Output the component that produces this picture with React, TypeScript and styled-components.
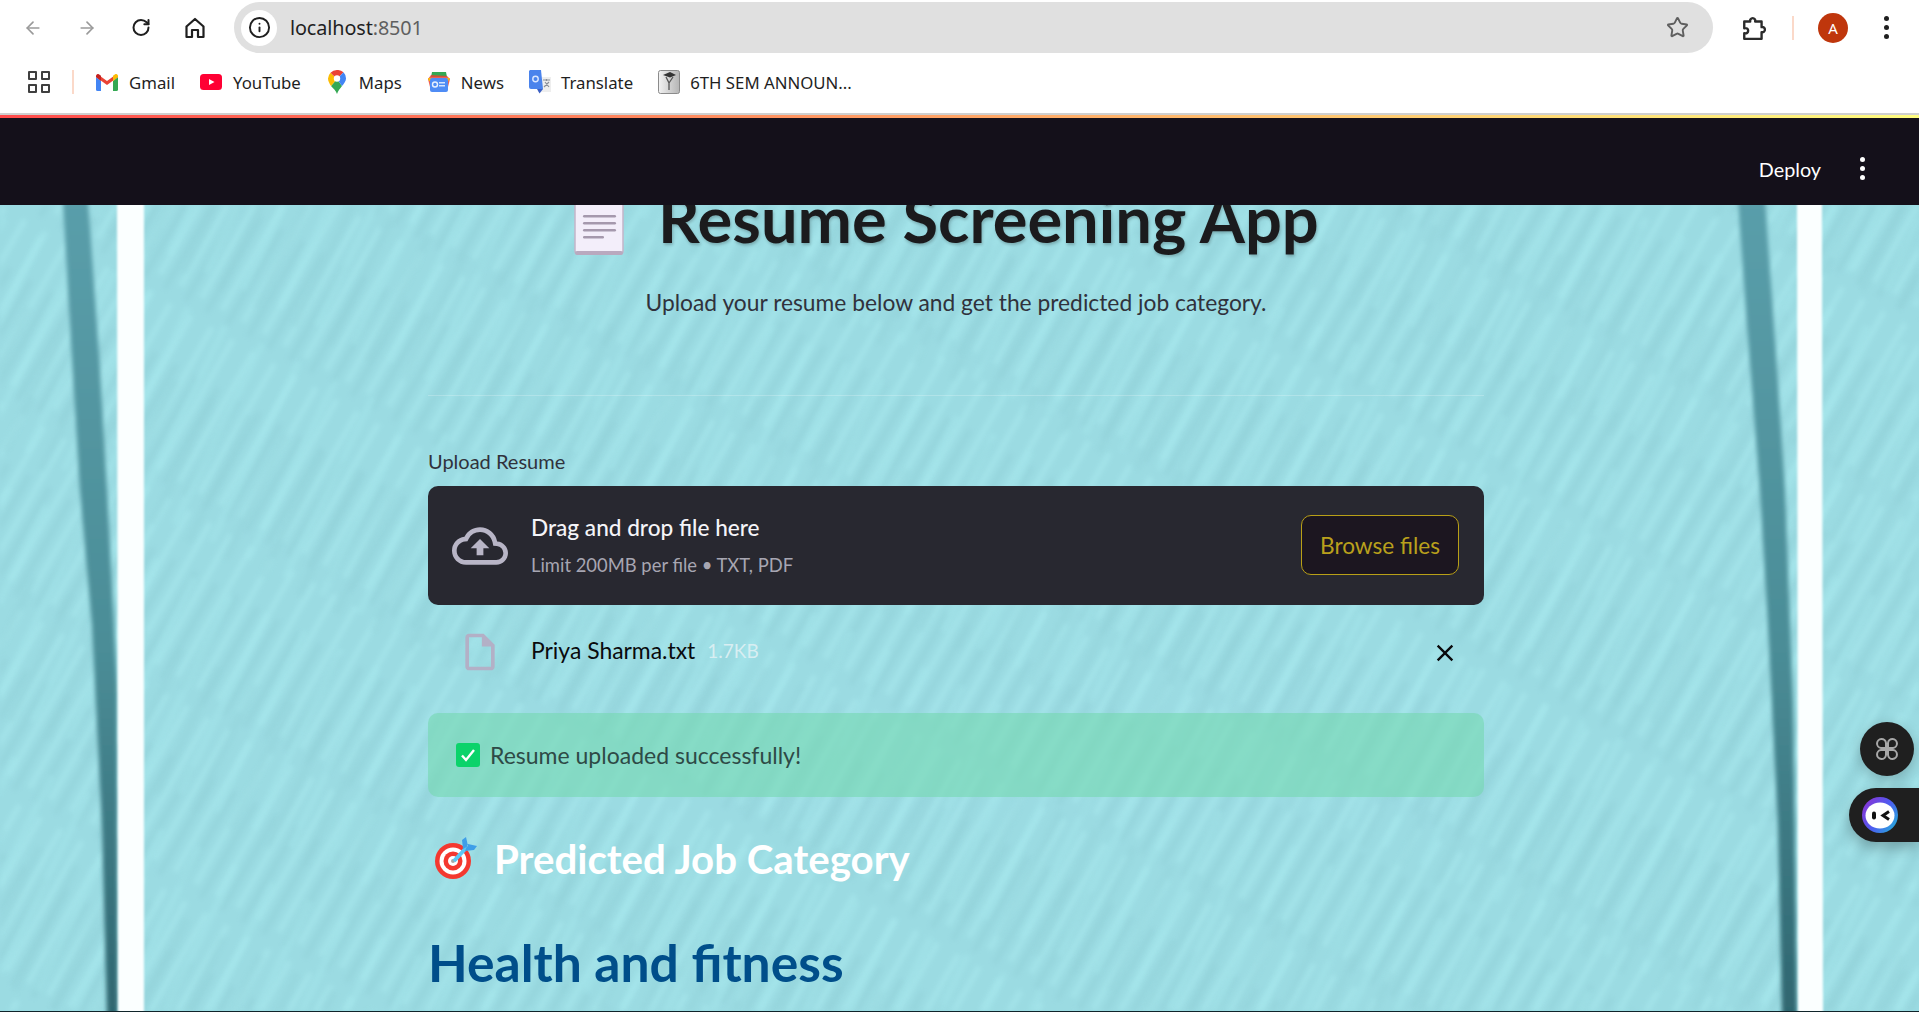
import React from 'react';
import styled, { createGlobalStyle } from 'styled-components';
import { ArrowLeft, ArrowRight, RotateCw, Info, Star } from 'lucide-react';
import { MdOutlineCloudUpload, MdOutlineInsertDriveFile, MdClose } from 'react-icons/md';

const GlobalStyle = createGlobalStyle`
  html, body {
    margin: 0;
    height: 100%;
    overflow: hidden;
    background: #fff;
  }
  * { box-sizing: border-box; }
`;

const chromeFont = `"Noto Sans", "Open Sans", sans-serif`;
const appFont = `"Lato", "Noto Sans", sans-serif`;

const Page = styled.div`
  width: 1919px;
  height: 1012px;
  display: flex;
  flex-direction: column;
  overflow: hidden;
`;

const Toolbar = styled.div`
  height: 58px;
  flex: none;
  display: flex;
  align-items: flex-start;
  padding: 2px 0 0 23px;
  background: #fff;
  font-family: ${chromeFont};
`;

const NavGroup = styled.div`
  height: 51px;
  display: flex;
  align-items: center;
  gap: 34px;
`;

const NavIcon = styled.span<{ $dim?: boolean }>`
  width: 20px;
  height: 20px;
  display: flex;
  align-items: center;
  justify-content: center;
  color: ${(p) => (p.$dim ? '#9a9a9a' : '#1f1f1f')};
`;

const Omnibox = styled.div`
  width: 1479px;
  height: 51px;
  margin-left: 29px;
  padding: 0 24px 0 7px;
  display: flex;
  align-items: center;
  border-radius: 26px;
  background: #e0e0e0;
`;

const SiteInfo = styled.span`
  width: 36px;
  height: 36px;
  flex: none;
  display: flex;
  align-items: center;
  justify-content: center;
  border-radius: 50%;
  background: #fff;
  color: #1f1f1f;
`;

const Url = styled.div`
  margin-left: 13px;
  flex: 1;
  font-size: 19.8px;
  color: #1f1f1f;
  letter-spacing: -0.1px;
  span { color: #5f5f5f; }
`;

const ToolbarEnd = styled.div`
  height: 51px;
  display: flex;
  align-items: center;
  padding-left: 29px;
`;

const VerticalRule = styled.span`
  width: 2px;
  height: 24px;
  background: #fbd9c9;
`;

const ToolbarRule = styled(VerticalRule)`
  margin-left: 26px;
`;

const Avatar = styled.span`
  width: 30px;
  height: 30px;
  margin: 0 36px 0 24px;
  display: flex;
  align-items: center;
  justify-content: center;
  border-radius: 50%;
  background: #bf360c;
  color: #fff;
  font-size: 15px;
`;

const Dots = styled.span<{ $color: string; $gap: number }>`
  width: 6px;
  display: flex;
  flex-direction: column;
  gap: ${(p) => p.$gap}px;
  i {
    width: 5px;
    height: 5px;
    border-radius: 50%;
    background: ${(p) => p.$color};
  }
`;

const BookmarkBar = styled.div`
  height: 55px;
  flex: none;
  display: flex;
  align-items: center;
  padding: 0 0 7px 28px;
  background: #fff;
  font-family: ${chromeFont};
  font-size: 16.8px;
  color: #1f1f1f;
`;

const AppsIcon = styled.span`
  width: 22px;
  height: 22px;
  display: grid;
  grid-template-columns: 9px 9px;
  gap: 4px;
  i {
    border: 2px solid #3f3f3f;
    border-radius: 1px;
  }
`;

const BookmarkRule = styled(VerticalRule)`
  margin: 0 22px;
`;

const Bookmark = styled.div<{ $gap: number; $end: number }>`
  display: flex;
  align-items: center;
  gap: ${(p) => p.$gap}px;
  margin-right: ${(p) => p.$end}px;
  white-space: nowrap;
`;

const ChromeLine = styled.div`
  height: 2px;
  flex: none;
  background: #cfcfcf;
`;

const Decoration = styled.div`
  height: 3px;
  flex: none;
  background: linear-gradient(90deg, #ff4b4b, #fffd80);
`;

const AppHeader = styled.header`
  height: 87px;
  flex: none;
  display: flex;
  align-items: center;
  justify-content: flex-end;
  padding: 14px 53px 0 0;
  background: #14101a;
  color: #fff;
  font-family: ${appFont};
  font-size: 19.8px;
`;

const DeployLabel = styled.span`
  margin-right: 39px;
`;

const Main = styled.main`
  position: relative;
  flex: 1;
  overflow: hidden;
  background: #9bdbe2;
  border-bottom: 1px solid #10242a;
  font-family: ${appFont};
`;

const BackgroundArt = styled.svg`
  position: absolute;
  inset: 0;
  width: 100%;
  height: 100%;
`;

const Content = styled.div`
  position: relative;
  width: 1056px;
  margin: -17px 0 0 428px;
`;

const TitleRow = styled.div`
  height: 80px;
  display: flex;
  align-items: flex-end;
  padding-left: 146px;
  gap: 34px;
`;

const DocSvg = styled.svg`
  flex: none;
  margin-bottom: 12px;
`;

const Title = styled.h1`
  margin: 0 0 10px;
  font-size: 65px;
  line-height: 80px;
  font-weight: 700;
  color: #1b1b1d;
  white-space: nowrap;
  text-shadow: 1px 2px 3px rgba(0, 0, 0, 0.22);
`;

const Subtitle = styled.p`
  margin: 17px 0 0;
  height: 34px;
  font-size: 22.8px;
  line-height: 34px;
  text-align: center;
  color: #30323c;
`;

const Divider = styled.hr`
  margin: 76px 0 0;
  border: 0;
  height: 1px;
  background: rgba(255, 255, 255, 0.22);
`;

const FieldLabel = styled.label`
  display: block;
  margin-top: 53px;
  height: 24px;
  font-size: 20px;
  line-height: 24px;
  color: #30323c;
`;

const Dropzone = styled.section`
  margin-top: 13px;
  height: 119px;
  padding: 0 25px 0 24px;
  display: flex;
  align-items: center;
  border-radius: 10px;
  background: #282830;
`;

const CloudIcon = styled(MdOutlineCloudUpload)`
  flex: none;
  color: #b8b5c6;
`;

const DropText = styled.div`
  flex: 1;
  margin-left: 23px;
`;

const DropTitle = styled.div`
  font-size: 22.6px;
  line-height: 30px;
  font-weight: 500;
  color: #f4f4f8;
`;

const DropHint = styled.div`
  margin-top: 9px;
  font-size: 18.4px;
  line-height: 26px;
  color: #a7a6b2;
`;

const BrowseButton = styled.button`
  width: 158px;
  height: 60px;
  margin-top: -1px;
  border: 1px solid #b89f17;
  border-radius: 10px;
  background: #1c1620;
  color: #b9a01c;
  font-family: inherit;
  font-size: 22.6px;
`;

const FileRow = styled.div`
  height: 108px;
  padding: 0 26px 14px 30px;
  display: flex;
  align-items: center;
`;

const FileIcon = styled(MdOutlineInsertDriveFile)`
  flex: none;
  color: #b3b0c6;
`;

const FileName = styled.span`
  margin: 0 0 4px 29px;
  font-size: 22.9px;
  color: #0a0a0c;
`;

const FileSize = styled.span`
  flex: 1;
  margin: 0 0 4px 12px;
  font-size: 19px;
  color: #d8eef2;
`;

const RemoveIcon = styled(MdClose)`
  flex: none;
  margin-top: 2px;
  margin-right: -1px;
  color: #0a0a0c;
`;

const SuccessAlert = styled.div`
  height: 84px;
  padding: 0 28px;
  display: flex;
  align-items: center;
  gap: 10px;
  border-radius: 10px;
  background: rgba(118, 217, 178, 0.62);
  font-size: 23px;
  color: #2e4a46;
`;

const SectionHeading = styled.h2`
  margin: 22px 0 0;
  height: 78px;
  display: flex;
  align-items: center;
  gap: 17px;
  padding-left: 7px;
  font-size: 40.2px;
  font-weight: 700;
  color: #fff;
`;

const CategoryHeading = styled.h1`
  margin: 31px 0 0;
  font-size: 51.6px;
  line-height: 68px;
  font-weight: 700;
  color: #004e8a;
`;

const ToolCircle = styled.div`
  position: absolute;
  top: 517px;
  right: 5px;
  width: 54px;
  height: 54px;
  display: flex;
  align-items: center;
  justify-content: center;
  border-radius: 50%;
  background: #1f1f1f;
  box-shadow: 0 4px 14px rgba(0, 0, 0, 0.22);
`;

const AssistantPill = styled.div`
  position: absolute;
  top: 583px;
  right: 0;
  width: 70px;
  height: 54px;
  padding-left: 13px;
  display: flex;
  align-items: center;
  border-radius: 27px 0 0 27px;
  background: #1f1f1f;
  box-shadow: 0 6px 14px rgba(0, 0, 0, 0.25);
`;

const StripePair: React.FC<{ dark: string; white: string; grad: string }> = ({ dark, white, grad }) => (
  <>
    <polygon points={dark} fill={`url(#${grad})`} filter="url(#soft)" />
    <polygon points={white} fill="#fbffff" filter="url(#softer)" />
  </>
);

const Background = () => (
  <BackgroundArt viewBox="0 0 1919 806" preserveAspectRatio="none">
    <defs>
      <filter id="soft" x="-40%" y="0" width="180%" height="100%">
        <feGaussianBlur stdDeviation="2" />
      </filter>
      <filter id="softer" x="-20%" y="0" width="140%" height="100%">
        <feGaussianBlur stdDeviation="1" />
      </filter>
      <filter id="streakBlur">
        <feGaussianBlur stdDeviation="2.4" />
      </filter>
      <pattern id="streaksA" width="24" height="170" patternUnits="userSpaceOnUse" patternTransform="rotate(30)">
        <rect x="2" y="0" width="6" height="150" fill="#aeeef3" />
        <rect x="14" y="50" width="5" height="110" fill="#8fcdd5" />
      </pattern>
      <pattern id="streaksB" width="41" height="240" patternUnits="userSpaceOnUse" patternTransform="rotate(26)">
        <rect x="6" y="10" width="7" height="200" fill="#a9ebf0" />
        <rect x="26" y="80" width="8" height="140" fill="#93d2d9" />
      </pattern>
      <linearGradient id="darkLeft" x1="0" y1="0" x2="0" y2="1">
        <stop offset="0" stopColor="#5a9eaa" />
        <stop offset="0.55" stopColor="#4b8d97" />
        <stop offset="1" stopColor="#2f6670" />
      </linearGradient>
    </defs>
    <rect width="1919" height="806" fill="url(#streaksA)" filter="url(#streakBlur)" opacity="0.42" />
    <rect width="1919" height="806" fill="url(#streaksB)" filter="url(#streakBlur)" opacity="0.35" />
    <StripePair
      grad="darkLeft"
      dark="63,-5 88,-5 99,150 107,285 117,480 118,811 107,811 102,620 92,420 80,285 70,120"
      white="117,-5 144,-5 144,811 118,811"
    />
    <StripePair
      grad="darkLeft"
      dark="1738,-5 1765,-5 1776,150 1785,285 1793,500 1797,811 1782,811 1778,620 1768,420 1760,285 1747,120"
      white="1797,-5 1822,-5 1823,811 1798,811"
    />
  </BackgroundArt>
);

const HomeGlyph = () => (
  <svg width="20" height="22" viewBox="0 0 20 22" fill="none" stroke="#1f1f1f" strokeWidth="2.2" strokeLinejoin="round">
    <path d="M1.5 9.500 10 2l8.500 7.500V20h-5.500v-7H7v7H1.500z" />
  </svg>
);

const PuzzleGlyph = () => (
  <svg width="24" height="26" viewBox="0 0 22 24" fill="none" stroke="#2b2b2b" strokeWidth="2.2" strokeLinejoin="round">
    <path d="M2 6h5.500a2.400 2.400 0 1 1 4.600 0H18v5.200a2.400 2.400 0 1 1 0 4.600V22H2v-5.200c2.600.6 3.600-1 3.600-2.300S4.600 11.600 2 12.200z" />
  </svg>
);

const GmailGlyph = () => (
  <svg width="22" height="17" viewBox="0 0 22 17">
    <path d="M0 3v12.500A1.500 1.500 0 0 0 1.500 17H5V7z" fill="#4285f4" />
    <path d="M17 17h3.500a1.500 1.500 0 0 0 1.500-1.500V3l-5 4z" fill="#34a853" />
    <path d="M0 3 11 11 22 3 20 .5 11 7 2 .5z" fill="#ea4335" />
    <path d="M17 7l5-4V2a2 2 0 0 0-3.200-1.600L17 1.800z" fill="#fbbc04" />
    <path d="M0 3V2A2 2 0 0 1 3.200.4L5 1.800V7z" fill="#c5221f" />
  </svg>
);

const YoutubeGlyph = () => (
  <svg width="22" height="16" viewBox="0 0 22 16">
    <rect width="22" height="16" rx="3.500" fill="#ff0033" />
    <path d="M9 5l5.500 3L9 11z" fill="#fff" />
  </svg>
);

const MapsGlyph = () => (
  <svg width="18" height="24" viewBox="0 0 18 24">
    <path d="M9 24c-1-3-3.500-5.500-6-8L9 9l5 7c-2 2.500-4 5-5 8z" fill="#34a853" />
    <path d="M2.500 2.700A9 9 0 0 0 0 8.500c0 2.500 1.500 5 3 7.500l6-7z" fill="#fbbc04" />
    <path d="M9 0a9 9 0 0 0-6.500 2.700L9 9l6.500-6.800A9 9 0 0 0 9 0z" fill="#ea4335" />
    <path d="M15.500 2.200 9 9l5 7c2-2.500 4-5 4-7.500a9 9 0 0 0-2.500-6.300z" fill="#4285f4" />
    <circle cx="9" cy="8.500" r="3.200" fill="#fff" />
  </svg>
);

const NewsGlyph = () => (
  <svg width="22" height="22" viewBox="0 0 22 22">
    <path d="M4 1h14l1 5H3z" fill="#34a853" />
    <path d="M3 4l16 1 3 3-2 8H2L0 8z" fill="#ea4335" opacity="0.85" />
    <path d="M0 7h22l-1.500 3H1z" fill="#fbbc04" />
    <rect x="2" y="7" width="18" height="14" rx="2" fill="#4f8cf5" />
    <rect x="11" y="11" width="6" height="1.500" fill="#d7e5fd" />
    <rect x="11" y="14" width="6" height="1.500" fill="#d7e5fd" />
    <circle cx="7" cy="13.500" r="2.500" fill="none" stroke="#e8f0fe" strokeWidth="1.400" />
  </svg>
);

const TranslateGlyph = () => (
  <svg width="22" height="24" viewBox="0 0 22 24">
    <rect x="9" y="7" width="13" height="15" fill="#eeeeee" />
    <path d="M1 0h11l2 19H2a2 2 0 0 1-2-2V1z" fill="#4a83ec" />
    <path d="M8 19h6l-3.500 4.500z" fill="#3b5fc4" />
    <circle cx="6.500" cy="9" r="2.700" fill="none" stroke="#dbe7ff" strokeWidth="1.400" />
    <path d="M14 10h7M17.500 9v2M15 17l5-5M16 12l4 5" stroke="#8a8f98" strokeWidth="1.200" fill="none" />
  </svg>
);

const SemGlyph = () => (
  <svg width="22" height="24" viewBox="0 0 22 24">
    <defs>
      <linearGradient id="semFill" x1="0" y1="0" x2="1" y2="0">
        <stop offset="0" stopColor="#f2f2f2" />
        <stop offset="1" stopColor="#b5b5b5" />
      </linearGradient>
    </defs>
    <rect x="0.500" y="0.500" width="21" height="23" rx="2" fill="url(#semFill)" stroke="#8b8b8b" />
    <path d="M5 5l7-3 6 3-6 2.500z" fill="#333" />
    <path d="M8 7l3 6v7M15 7l-4 6" stroke="#555" strokeWidth="1.300" fill="none" />
  </svg>
);

const DocEmoji = () => (
  <DocSvg width="50" height="67" viewBox="0 0 50 67">
    <rect x="1" y="0" width="48" height="65" rx="3" fill="#f3eefa" stroke="#c3b5c9" strokeWidth="1.500" />
    <rect x="1" y="62" width="48" height="4" rx="2" fill="#b9a9bf" />
    <g fill="#a599ad">
      <rect x="9" y="26" width="33" height="2.500" rx="1.200" />
      <rect x="9" y="33" width="33" height="2.500" rx="1.200" />
      <rect x="9" y="40" width="33" height="2.500" rx="1.200" />
      <rect x="9" y="47" width="21" height="2.500" rx="1.200" />
    </g>
  </DocSvg>
);

const CheckBox = () => (
  <svg width="24" height="24" viewBox="0 0 24 24">
    <rect width="24" height="24" rx="3" fill="#0bd36a" />
    <path d="M6 12.500l4 4.500 8-10" fill="none" stroke="#fff" strokeWidth="2.400" />
  </svg>
);

const TargetEmoji = () => (
  <svg width="42" height="42" viewBox="0 0 42 42">
    <circle cx="18" cy="24" r="18" fill="#f4382f" />
    <circle cx="18" cy="24" r="13.500" fill="#fff" />
    <circle cx="18" cy="24" r="9.500" fill="#f4382f" />
    <circle cx="18" cy="24" r="5" fill="#fff" />
    <circle cx="18" cy="24" r="2" fill="#a8a8a8" />
    <path d="M19 24 32 10" stroke="#5bc8f5" strokeWidth="4" />
    <path d="M28 12 27 3l4-3 2 9zM30 14l9-1 3-4-9-2z" fill="#3f9ee8" />
  </svg>
);

const CommandGlyph = () => (
  <svg width="24" height="24" viewBox="0 0 24 24" fill="none" stroke="#a8a8a8" strokeWidth="2">
    <path d="M11 11H6a4.500 4.500 0 1 1 5-5zM13 11h5a4.500 4.500 0 1 0-5-5zM11 13H6a4.500 4.500 0 1 0 5 5zM13 13h5a4.500 4.500 0 1 1-5 5z" />
  </svg>
);

const AssistantLogo = () => (
  <svg width="36" height="36" viewBox="0 0 36 36">
    <defs>
      <linearGradient id="ring" x1="0" y1="0.200" x2="1" y2="0.900">
        <stop offset="0" stopColor="#8a35d6" />
        <stop offset="0.5" stopColor="#4d5cf0" />
        <stop offset="1" stopColor="#22b4d8" />
      </linearGradient>
    </defs>
    <circle cx="18" cy="18" r="18" fill="url(#ring)" />
    <ellipse cx="18" cy="18.500" rx="14.500" ry="13" fill="#fff" />
    <rect x="10" y="14.500" width="4" height="8" rx="2" fill="#111" />
    <path d="M27 14.500 21 18.500l6 4" fill="none" stroke="#111" strokeWidth="3" />
  </svg>
);

const bookmarks = [
  { label: 'Gmail', icon: <GmailGlyph />, gap: 11, end: 25 },
  { label: 'YouTube', icon: <YoutubeGlyph />, gap: 11, end: 27 },
  { label: 'Maps', icon: <MapsGlyph />, gap: 13, end: 26 },
  { label: 'News', icon: <NewsGlyph />, gap: 11, end: 25 },
  { label: 'Translate', icon: <TranslateGlyph />, gap: 10, end: 25 },
  { label: '6TH SEM ANNOUN...', icon: <SemGlyph />, gap: 10, end: 0 },
];

const App: React.FC = () => (
  <Page>
    <GlobalStyle />
    <Toolbar>
      <NavGroup>
        <NavIcon $dim><ArrowLeft size={24} strokeWidth={2} /></NavIcon>
        <NavIcon $dim><ArrowRight size={24} strokeWidth={2} /></NavIcon>
        <NavIcon><RotateCw size={21} strokeWidth={2.4} /></NavIcon>
        <NavIcon><HomeGlyph /></NavIcon>
      </NavGroup>
      <Omnibox>
        <SiteInfo><Info size={23} strokeWidth={2} /></SiteInfo>
        <Url>localhost<span>:8501</span></Url>
        <Star size={23} color="#5f5f5f" strokeWidth={2} />
      </Omnibox>
      <ToolbarEnd>
        <PuzzleGlyph />
        <ToolbarRule />
        <Avatar>A</Avatar>
        <Dots $color="#1f1f1f" $gap={4}><i /><i /><i /></Dots>
      </ToolbarEnd>
    </Toolbar>
    <BookmarkBar>
      <AppsIcon><i /><i /><i /><i /></AppsIcon>
      <BookmarkRule />
      {bookmarks.map((b) => (
        <Bookmark key={b.label} $gap={b.gap} $end={b.end}>
          {b.icon}
          {b.label}
        </Bookmark>
      ))}
    </BookmarkBar>
    <ChromeLine />
    <Decoration />
    <AppHeader>
      <DeployLabel>Deploy</DeployLabel>
      <Dots $color="#fff" $gap={4}><i /><i /><i /></Dots>
    </AppHeader>
    <Main>
      <Background />
      <Content>
        <TitleRow>
          <DocEmoji />
          <Title>Resume Screening App</Title>
        </TitleRow>
        <Subtitle>Upload your resume below and get the predicted job category.</Subtitle>
        <Divider />
        <FieldLabel>Upload Resume</FieldLabel>
        <Dropzone>
          <CloudIcon size={56} />
          <DropText>
            <DropTitle>Drag and drop file here</DropTitle>
            <DropHint>Limit 200MB per file • TXT, PDF</DropHint>
          </DropText>
          <BrowseButton>Browse files</BrowseButton>
        </Dropzone>
        <FileRow>
          <FileIcon size={44} />
          <FileName>Priya Sharma.txt</FileName>
          <FileSize>1.7KB</FileSize>
          <RemoveIcon size={28} />
        </FileRow>
        <SuccessAlert>
          <CheckBox />
          Resume uploaded successfully!
        </SuccessAlert>
        <SectionHeading>
          <TargetEmoji />
          Predicted Job Category
        </SectionHeading>
        <CategoryHeading>Health and fitness</CategoryHeading>
      </Content>
      <ToolCircle><CommandGlyph /></ToolCircle>
      <AssistantPill><AssistantLogo /></AssistantPill>
    </Main>
  </Page>
);

export default App;
